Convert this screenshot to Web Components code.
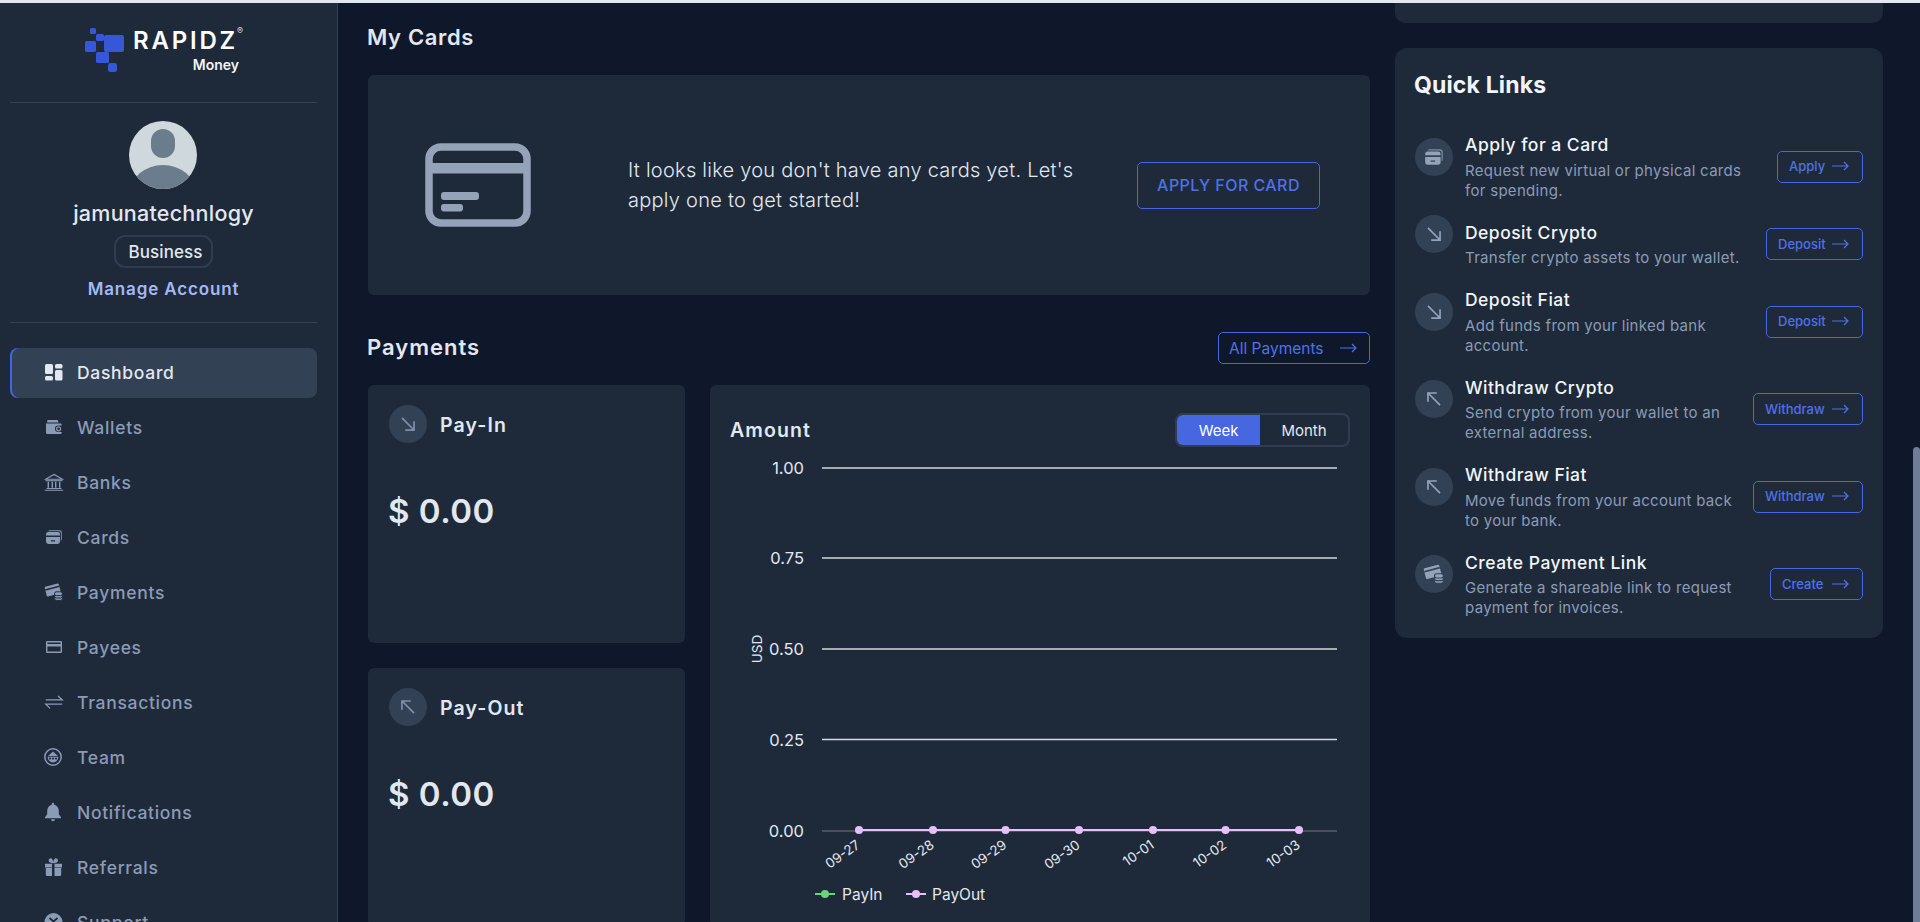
<!DOCTYPE html>
<html lang="en">
<head>
<meta charset="utf-8">
<title>Rapidz Money</title>
<style>
  html, body { margin: 0; height: 100%; overflow: hidden; background: #0f172a; }
  body { font-family: Inter, "Noto Sans", sans-serif; color: #e2e8f0; }
</style>
</head>
<body>
<app-shell>
  <side-bar slot="side">
    <nav-item icon="dashboard" active>Dashboard</nav-item>
    <nav-item icon="wallet">Wallets</nav-item>
    <nav-item icon="bank">Banks</nav-item>
    <nav-item icon="cards">Cards</nav-item>
    <nav-item icon="payments">Payments</nav-item>
    <nav-item icon="payee">Payees</nav-item>
    <nav-item icon="transfer">Transactions</nav-item>
    <nav-item icon="team">Team</nav-item>
    <nav-item icon="bell">Notifications</nav-item>
    <nav-item icon="gift">Referrals</nav-item>
    <nav-item icon="support">Support</nav-item>
  </side-bar>
  <center-col>
    <my-cards></my-cards>
    <payments-section>
      <pay-card slot="cards" icon="down" label="Pay-In" amount="$ 0.00"></pay-card>
      <pay-card slot="cards" icon="up" label="Pay-Out" amount="$ 0.00"></pay-card>
      <amount-chart slot="chart"></amount-chart>
    </payments-section>
  </center-col>
  <right-col>
    <quick-links>
      <quick-link icon="cards" action="Apply" width="86">Apply for a Card<span slot="desc">Request new virtual or physical cards<br>for spending.</span></quick-link>
      <quick-link icon="down" action="Deposit" width="97">Deposit Crypto<span slot="desc">Transfer crypto assets to your wallet.</span></quick-link>
      <quick-link icon="down" action="Deposit" width="97">Deposit Fiat<span slot="desc">Add funds from your linked bank<br>account.</span></quick-link>
      <quick-link icon="up" action="Withdraw" width="110">Withdraw Crypto<span slot="desc">Send crypto from your wallet to an<br>external address.</span></quick-link>
      <quick-link icon="up" action="Withdraw" width="110">Withdraw Fiat<span slot="desc">Move funds from your account back<br>to your bank.</span></quick-link>
      <quick-link icon="payments" action="Create" width="93">Create Payment Link<span slot="desc">Generate a shareable link to request<br>payment for invoices.</span></quick-link>
    </quick-links>
  </right-col>
</app-shell>

<script>
// --cut is the colour behind an icon, for the notches drawn over its filled parts
const ICONS = {
  dashboard: '<svg viewBox="0 0 20 20" fill="currentColor"><rect x="1" y="2" width="8" height="10" rx="1.5"/><rect x="1" y="14" width="8" height="4.5" rx="1.5"/><rect x="11" y="2" width="7.5" height="4.5" rx="1.5"/><rect x="11" y="8" width="7.5" height="10.5" rx="1.5"/></svg>',
  wallet: '<svg viewBox="0 0 20 20" fill="currentColor"><path d="M3.5 3h9.5a1.2 1.2 0 0 1 1.2 1.2V5.4H3z"/><path fill-rule="evenodd" d="M2 6.4h14.4a1.3 1.3 0 0 1 1.3 1.3v.8h-3.4a3.3 3.3 0 0 0 0 6.6h3.4v.6a1.3 1.3 0 0 1-1.3 1.3H3.4A1.4 1.4 0 0 1 2 15.6z"/><path fill-rule="evenodd" d="M14.6 9.2a2.6 2.6 0 1 1 0 5.2 2.6 2.6 0 0 1 0-5.2zm0 1.2a1.4 1.4 0 1 0 0 2.8 1.4 1.4 0 0 0 0-2.8z"/></svg>',
  bank: '<svg viewBox="0 0 20 20" fill="none" stroke="currentColor" stroke-width="1.1"><path d="M1.5 7.2 10 2.4l8.5 4.8z"/><path d="M1.5 8.7h17"/><path d="M4.3 9.8v6M8.3 9.8v6M11.7 9.8v6M15.7 9.8v6" stroke-width="1.4"/><path d="M2.6 16.5h14.8M.8 18.2h18.4"/></svg>',
  cards: '<svg viewBox="0 0 20 20" fill="currentColor"><path d="M5.5 3h9.8A2.7 2.7 0 0 1 18 5.7v6.4a2.6 2.6 0 0 1-1.1 2V6.6a2.4 2.4 0 0 0-2.4-2.4H4.1A2.7 2.7 0 0 1 5.5 3z" opacity=".75"/><path d="M4.4 5h9.4A2.2 2.2 0 0 1 16 7.2v1.3H2V7.4A2.4 2.4 0 0 1 4.4 5z"/><path fill-rule="evenodd" d="M2 10h14v4.6a2.4 2.4 0 0 1-2.4 2.4H4.4A2.4 2.4 0 0 1 2 14.6zm5 3.2v1.2h4v-1.2z"/></svg>',
  payments: '<svg viewBox="0 0 20 20" fill="currentColor"><g transform="rotate(-15 9 8)"><rect x="1.5" y="3" width="14.5" height="10" rx="1"/><rect x="1.5" y="5.2" width="14.5" height="1.5" fill="var(--cut)"/></g><g stroke="var(--cut)" stroke-width="1"><rect x="10.5" y="14.6" width="8" height="3.8" rx="1.9"/><rect x="10.5" y="12.2" width="8" height="3.8" rx="1.9"/><rect x="10.5" y="9.8" width="8" height="3.8" rx="1.9"/></g></svg>',
  payee: '<svg viewBox="0 0 20 20" fill="currentColor"><path fill-rule="evenodd" d="M3.2 4h13.6A1.3 1.3 0 0 1 18 5.3v9.4a1.3 1.3 0 0 1-1.3 1.3H3.2A1.3 1.3 0 0 1 2 14.7V5.3A1.3 1.3 0 0 1 3.2 4zm.2 1.5v1.6h13.2V5.5zm0 4v5h13.2v-5z"/></svg>',
  transfer: '<svg viewBox="0 0 20 20" fill="none" stroke="currentColor" stroke-width="1.3"><path d="M1.8 7.8h16.4L14 4M18.2 12.2H1.8L6 16.4"/></svg>',
  team: '<svg viewBox="0 0 20 20" fill="currentColor"><circle cx="9" cy="10" r="8.2" fill="none" stroke="currentColor" stroke-width="1.5"/><path d="M3.8 9.2 9 4.6l5.2 4.6z"/><path d="M3.6 10h10.8a5.4 5.4 0 0 1-10.800 0z"/><g fill="var(--cut)"><circle cx="6" cy="11.6" r="1.1"/><circle cx="9" cy="11.6" r="1.1"/><circle cx="12" cy="11.6" r="1.1"/></g></svg>',
  bell: '<svg viewBox="0 0 20 20" fill="currentColor"><path d="M9 .8a1.2 1.2 0 0 1 1.2 1.2v.7c2.8.7 4.6 3 4.6 6v3.6l2.2 3v.9H1v-.9l2.2-3V8.7c0-3 1.800-5.300 4.600-6V2A1.200 1.200 0 0 1 9 .8z"/><path d="M7 17.300h4a2 2 0 0 1-4 0z"/></svg>',
  gift: '<svg viewBox="0 0 20 20" fill="currentColor"><path d="M1 6.800h7v3.700H1zM10.500 6.800h7.500v3.700h-7.500zM1.800 10.900h6.200V19H3.300a1.500 1.500 0 0 1-1.500-1.500zM10.500 10.900h6.700v6.600a1.500 1.500 0 0 1-1.500 1.500h-5.200z"/><path d="M9.200 6.300C7 6.300 4.600 5.600 4.600 3.600 4.600 2.100 6 .8 7.200 1.300 8.400 1.800 9.200 3.800 9.200 6.300zm0 0c2.300 0 4.800-.7 4.800-2.700 0-1.500-1.400-2.800-2.600-2.300-1.200.5-2.200 2.500-2.200 5z"/></svg>',
  support: '<svg viewBox="0 0 20 20" fill="currentColor"><circle cx="9.500" cy="10" r="9"/><path d="M5.500 6 9.500 9.500 13.500 6" fill="none" stroke="var(--cut)" stroke-width="1.800"/></svg>',
  down: '<svg viewBox="0 0 20 20" fill="none" stroke="currentColor" stroke-width="1.500"><path d="M4.500 4.500 15 15M15.500 7.500v8h-8"/></svg>',
  up: '<svg viewBox="0 0 20 20" fill="none" stroke="currentColor" stroke-width="1.500"><path d="M15.500 15.500 5 5M4.500 12.500v-8h8"/></svg>'
};

class AppShell extends HTMLElement {
  connectedCallback() {
    this.attachShadow({ mode: 'open' });
    this.shadowRoot.innerHTML = `
      <style>
        :host { display: block; height: 922px; overflow: hidden; position: relative; border-top: 3px solid #e2e8f0; box-sizing: border-box; }
        .wrap { display: grid; grid-template-columns: 338px 1fr; height: 100%; }
        main { display: grid; grid-template-columns: 1002px 488px; column-gap: 25px; padding-left: 30px; align-items: start; min-width: 0; }
        .thumb { position: absolute; right: 0; top: 444px; bottom: 0; width: 7px; background: #6f7d96; border-radius: 4px 4px 0 0; }
      </style>
      <div class="wrap">
        <slot name="side"></slot>
        <main><slot></slot></main>
      </div>
      <div class="thumb"></div>`;
  }
}
customElements.define('app-shell', AppShell);

class SideBar extends HTMLElement {
  connectedCallback() {
    this.attachShadow({ mode: 'open' });
    this.shadowRoot.innerHTML = `
      <style>
        :host { display: block; width: 338px; box-sizing: border-box; height: 919px; overflow: hidden; background: #1e2a3a; border-right: 1px solid #334155; padding: 0 20px 0 10px; --cut: #1e2a3a; }
        .brand { height: 100px; box-sizing: border-box; padding: 24px 0 0 75px; display: flex; gap: 6px; border-bottom: 1px solid #334155; }
        .brand svg { width: 40px; height: 45px; flex: none; }
        .word { display: flex; flex-direction: column; align-items: flex-end; width: 108px; }
        .rapidz { font-size: 24px; font-weight: 600; letter-spacing: 2.8px; color: #fff; line-height: 28px; position: relative; margin-right: 1px; }
        .rapidz sup { position: absolute; left: 100%; top: -1px; font-size: 9px; line-height: 10px; letter-spacing: 0; font-weight: 400; color: #cbd5e1; margin-left: -1px; }
        .money { font-size: 14px; font-weight: 600; color: #f1f5f9; line-height: 18px; margin: 1px 0 0 0; }
        .profile { height: 220px; box-sizing: border-box; border-bottom: 1px solid #334155; display: flex; flex-direction: column; align-items: center; padding-top: 18px; }
        .avatar { width: 68px; height: 68px; display: block; margin-right: 2px; }
        .name { font-size: 21.5px; font-weight: 500; line-height: 28px; margin-top: 10px; letter-spacing: .25px; color: #e2e8f0; }
        .chip { margin-top: 8px; width: 99px; height: 33px; box-sizing: border-box; border: 2px solid #2f3c52; border-radius: 11px; display: flex; align-items: center; justify-content: center; padding-left: 4px; font-size: 17px; font-weight: 500; letter-spacing: .1px; color: #e2e8f0; }
        .manage { margin-top: 9px; font-size: 17px; font-weight: 600; line-height: 24px; letter-spacing: .85px; color: #a5b8f3; }
        nav { margin-top: 25px; display: flex; flex-direction: column; gap: 5px; }
      </style>
      <div class="brand">
        <svg viewBox="0 0 40 45" fill="#3557d8">
          <rect x="5" y="1" width="6" height="6" rx="1.5"/>
          <rect x="11" y="7" width="8" height="7" rx="1.5"/>
          <rect x="0" y="14" width="11" height="11" rx="1.5"/>
          <rect x="19" y="8" width="20" height="17" rx="2"/>
          <rect x="11" y="25" width="13" height="11" rx="1.5"/>
          <rect x="23" y="36" width="9" height="9" rx="2.5"/>
        </svg>
        <div class="word">
          <div class="rapidz">RAPIDZ<sup>®</sup></div>
          <div class="money">Money</div>
        </div>
      </div>
      <div class="profile">
        <svg class="avatar" viewBox="0 0 68 68">
          <defs><clipPath id="av"><circle cx="34" cy="34" r="34"/></clipPath></defs>
          <g clip-path="url(#av)">
            <rect width="68" height="68" fill="#cfd8dc"/>
            <rect x="22" y="8" width="24" height="29" rx="12" fill="#6b7c8c"/>
            <ellipse cx="34" cy="72" rx="33" ry="28" fill="#6b7c8c"/>
          </g>
        </svg>
        <div class="name">jamunatechnlogy</div>
        <div class="chip">Business</div>
        <div class="manage">Manage Account</div>
      </div>
      <nav><slot></slot></nav>`;
  }
}
customElements.define('side-bar', SideBar);

class NavItem extends HTMLElement {
  connectedCallback() {
    this.attachShadow({ mode: 'open' });
    const active = this.hasAttribute('active');
    this.shadowRoot.innerHTML = `
      <style>
        :host { display: flex; align-items: center; gap: 13px; height: 50px; box-sizing: border-box; padding: 0 0 2px 34px; font-size: 17.5px; font-weight: 500; letter-spacing: .7px; border-radius: 8px;
          color: ${active ? '#e2e8f0' : '#8c9bb5'}; ${active ? 'background: #334155; box-shadow: inset 2px 0 0 #4366e0;' : ''} }
        svg { width: 20px; height: 20px; flex: none; }
      </style>
      ${ICONS[this.getAttribute('icon')]}<slot></slot>`;
  }
}
customElements.define('nav-item', NavItem);

class CenterCol extends HTMLElement {
  connectedCallback() {
    this.attachShadow({ mode: 'open' });
    this.shadowRoot.innerHTML = `<style>:host { display: block; width: 1002px; }</style><slot></slot>`;
  }
}
customElements.define('center-col', CenterCol);

class RightCol extends HTMLElement {
  connectedCallback() {
    this.attachShadow({ mode: 'open' });
    this.shadowRoot.innerHTML = `
      <style>
        :host { display: block; width: 488px; }
        .stub { height: 20px; background: #1e2a3a; border-radius: 0 0 10px 10px; margin-bottom: 25px; }
      </style>
      <div class="stub"></div><slot></slot>`;
  }
}
customElements.define('right-col', RightCol);

class MyCards extends HTMLElement {
  connectedCallback() {
    this.attachShadow({ mode: 'open' });
    this.shadowRoot.innerHTML = `
      <style>
        :host { display: block; }
        h2 { margin: 0 0 0 -1px; height: 72px; box-sizing: border-box; padding-top: 20px; font-size: 22px; line-height: 28px; font-weight: 600; color: #e2e8f0; letter-spacing: .65px; }
        .card { height: 220px; background: #1e2a3a; border-radius: 6px; display: flex; align-items: center; padding-left: 57px; padding-right: 50px; box-sizing: border-box; }
        svg { width: 106px; height: 84px; flex: none; }
        p { margin: 0 0 0 97px; width: 415px; flex: none; font-size: 20px; line-height: 30px; font-weight: 300; color: #e2e8f0; letter-spacing: .25px; white-space: nowrap; }
        .btn { margin: 0 0 0 auto; width: 183px; height: 47px; box-sizing: border-box; border: 1px solid #4567e0; border-radius: 5px; color: #4f71e8; display: flex; align-items: center; justify-content: center; font-size: 16px; font-weight: 500; letter-spacing: .45px; }
      </style>
      <h2>My Cards</h2>
      <div class="card">
        <svg viewBox="0 0 106 84" fill="none">
          <rect x="4" y="4" width="98" height="76" rx="12" stroke="#94a3b8" stroke-width="7.5"/>
          <rect x="4" y="20" width="98" height="10.5" fill="#94a3b8"/>
          <rect x="16" y="49" width="38" height="8" rx="3" fill="#94a3b8"/>
          <rect x="16" y="61" width="22" height="7.5" rx="3" fill="#94a3b8"/>
        </svg>
        <p>It looks like you don't have any cards yet. Let's<br>apply one to get started!</p>
        <div class="btn">APPLY FOR CARD</div>
      </div>`;
  }
}
customElements.define('my-cards', MyCards);

class PaymentsSection extends HTMLElement {
  connectedCallback() {
    this.attachShadow({ mode: 'open' });
    this.shadowRoot.innerHTML = `
      <style>
        :host { display: block; margin-top: 37px; }
        header { display: flex; align-items: center; justify-content: space-between; height: 32px; margin-bottom: 21px; }
        h2 { margin: -2px 0 0 -1px; font-size: 22px; font-weight: 600; color: #e2e8f0; letter-spacing: 1px; }
        .all { width: 152px; height: 32px; box-sizing: border-box; border: 1px solid #4567e0; border-radius: 5px; color: #4f71e8; font-size: 15.5px; display: flex; align-items: center; justify-content: space-between; padding: 0 12px 0 10px; }
        .all svg { width: 17px; height: 10px; }
        .grid { display: grid; grid-template-columns: 317px 660px; column-gap: 25px; }
        .stack { display: flex; flex-direction: column; gap: 25px; }
      </style>
      <header>
        <h2>Payments</h2>
        <div class="all">All Payments<svg viewBox="0 0 17 10" fill="none" stroke="currentColor" stroke-width="1.2"><path d="M0 5h16M12 1l4 4-4 4"/></svg></div>
      </header>
      <div class="grid">
        <div class="stack"><slot name="cards"></slot></div>
        <slot name="chart"></slot>
      </div>`;
  }
}
customElements.define('payments-section', PaymentsSection);

class PayCard extends HTMLElement {
  connectedCallback() {
    this.attachShadow({ mode: 'open' });
    this.shadowRoot.innerHTML = `
      <style>
        :host { display: block; height: 258px; box-sizing: border-box; background: #1e2a3a; border-radius: 6px; padding: 20px 21px; }
        .head { display: flex; align-items: center; gap: 13px; height: 38px; }
        .dot { width: 38px; height: 38px; border-radius: 50%; background: #334155; color: #8090aa; display: flex; align-items: center; justify-content: center; }
        .dot svg { width: 22px; height: 22px; }
        .label { font-size: 19.5px; font-weight: 600; letter-spacing: 1.1px; color: #e2e8f0; margin-top: 1px; }
        .amount { margin-top: 45px; font-size: 33px; line-height: 46px; font-weight: 600; letter-spacing: .5px; color: #e2e8f0; margin-left: -1px; }
      </style>
      <div class="head"><div class="dot">${ICONS[this.getAttribute('icon')]}</div><div class="label">${this.getAttribute('label')}</div></div>
      <div class="amount">${this.getAttribute('amount')}</div>`;
  }
}
customElements.define('pay-card', PayCard);

class AmountChart extends HTMLElement {
  connectedCallback() {
    this.attachShadow({ mode: 'open' });
    const grid = [['1.00', 21], ['0.75', 111], ['0.50', 202], ['0.25', 292.5], ['0.00', 384]];
    const xs = [129, 203, 275.5, 349, 423, 495.5, 569];
    const days = ['09-27', '09-28', '09-29', '09-30', '10-01', '10-02', '10-03'];
    const lines = grid.map(([t, y], i) => `
      <line x1="92" x2="607" y1="${y}" y2="${y}" stroke="${i < 4 ? '#d5d9de' : '#5a5f68'}" stroke-width="1.4"/>
      <text x="74" y="${y}" text-anchor="end" dominant-baseline="central" font-size="16.5">${t}</text>`).join('');
    const ticks = xs.map((x, i) => `
      <text x="${x + 2}" y="400" text-anchor="end" font-size="13.5" transform="rotate(-35 ${x + 2} 400)">${days[i]}</text>`).join('');
    const dots = xs.map(x => `<circle cx="${x}" cy="383" r="4" fill="#e6c1f8"/>`).join('');
    this.shadowRoot.innerHTML = `
      <style>
        :host { display: block; height: 541px; box-sizing: border-box; background: #1e2a3a; border-radius: 6px; padding: 28px 20px 0; }
        .head { display: flex; align-items: center; justify-content: space-between; height: 34px; }
        .title { font-size: 19.5px; font-weight: 600; letter-spacing: 1.1px; color: #e2e8f0; }
        .toggle { width: 175px; height: 34px; box-sizing: border-box; border: 2px solid #2f3c52; border-radius: 8px; display: flex; overflow: hidden; font-size: 15px; }
        .toggle div { display: flex; align-items: center; justify-content: center; color: #e2e8f0; }
        .on { width: 83px; background: #4667e0; color: #fff !important; }
        .off { flex: 1; }
        svg { display: block; width: 620px; height: 479px; font-family: Inter, sans-serif; }
        text { fill: #e2e8f0; }
      </style>
      <div class="head">
        <div class="title">Amount</div>
        <div class="toggle"><div class="on">Week</div><div class="off">Month</div></div>
      </div>
      <svg viewBox="0 0 620 479">
        <text x="27" y="202" text-anchor="middle" dominant-baseline="central" font-size="13.5" transform="rotate(-90 27 202)">USD</text>
        ${lines}
        <line x1="129" x2="569" y1="383" y2="383" stroke="#e6c1f8" stroke-width="2"/>
        ${dots}
        ${ticks}
        <line x1="85" x2="105" y1="447" y2="447" stroke="#6bd37b" stroke-width="2"/><circle cx="95" cy="447" r="4" fill="#6bd37b"/>
        <text x="112" y="447" dominant-baseline="central" font-size="15.5">PayIn</text>
        <line x1="176" x2="196" y1="447" y2="447" stroke="#e6c1f8" stroke-width="2"/><circle cx="186" cy="447" r="4" fill="#e6c1f8"/>
        <text x="202" y="447" dominant-baseline="central" font-size="15.5">PayOut</text>
      </svg>`;
  }
}
customElements.define('amount-chart', AmountChart);

class QuickLinks extends HTMLElement {
  connectedCallback() {
    this.attachShadow({ mode: 'open' });
    this.shadowRoot.innerHTML = `
      <style>
        :host { display: block; height: 590px; box-sizing: border-box; background: #1e2a3a; border-radius: 12px; padding: 21px 20px 0; }
        h3 { margin: 0 0 29px -1px; font-size: 23px; line-height: 33px; font-weight: 700; color: #f1f5f9; letter-spacing: .15px; padding-bottom: 2px; }
        .list { display: flex; flex-direction: column; gap: 20px; }
      </style>
      <h3>Quick Links</h3>
      <div class="list"><slot></slot></div>`;
  }
}
customElements.define('quick-links', QuickLinks);

class QuickLink extends HTMLElement {
  connectedCallback() {
    this.attachShadow({ mode: 'open' });
    this.shadowRoot.innerHTML = `
      <style>
        :host { display: flex; align-items: center; gap: 12px; }
        .dot { --cut: #334155; width: 38px; height: 38px; transform: translateY(-10px); flex: none; border-radius: 50%; background: #334155; color: #94a3b8; display: flex; align-items: center; justify-content: center; }
        .dot svg { width: 22px; height: 22px; }
        .text { flex: 1; min-width: 0; white-space: nowrap; }
        .title { font-size: 17.5px; line-height: 23.5px; padding-bottom: 4px; font-weight: 500; letter-spacing: .48px; color: #f1f5f9; }
        .desc { font-size: 15px; line-height: 20px; color: #8c9bb5; letter-spacing: .3px; }
        .btn { width: ${this.getAttribute('width')}px; height: 32px; flex: none; box-sizing: border-box; border: 1px solid #4567e0; border-radius: 5px; color: #4f71e8; font-size: 13px; font-weight: 500; display: flex; align-items: center; justify-content: space-between; padding: 0 13px 1px 11px; }
        .btn svg { width: 17px; height: 10px; }
      </style>
      <div class="dot">${ICONS[this.getAttribute('icon')]}</div>
      <div class="text">
        <div class="title"><slot></slot></div>
        <div class="desc"><slot name="desc"></slot></div>
      </div>
      <div class="btn">${this.getAttribute('action')}<svg viewBox="0 0 17 10" fill="none" stroke="currentColor" stroke-width="1.2"><path d="M0 5h16M12 1l4 4-4 4"/></svg></div>`;
  }
}
customElements.define('quick-link', QuickLink);
</script>
</body>
</html>
